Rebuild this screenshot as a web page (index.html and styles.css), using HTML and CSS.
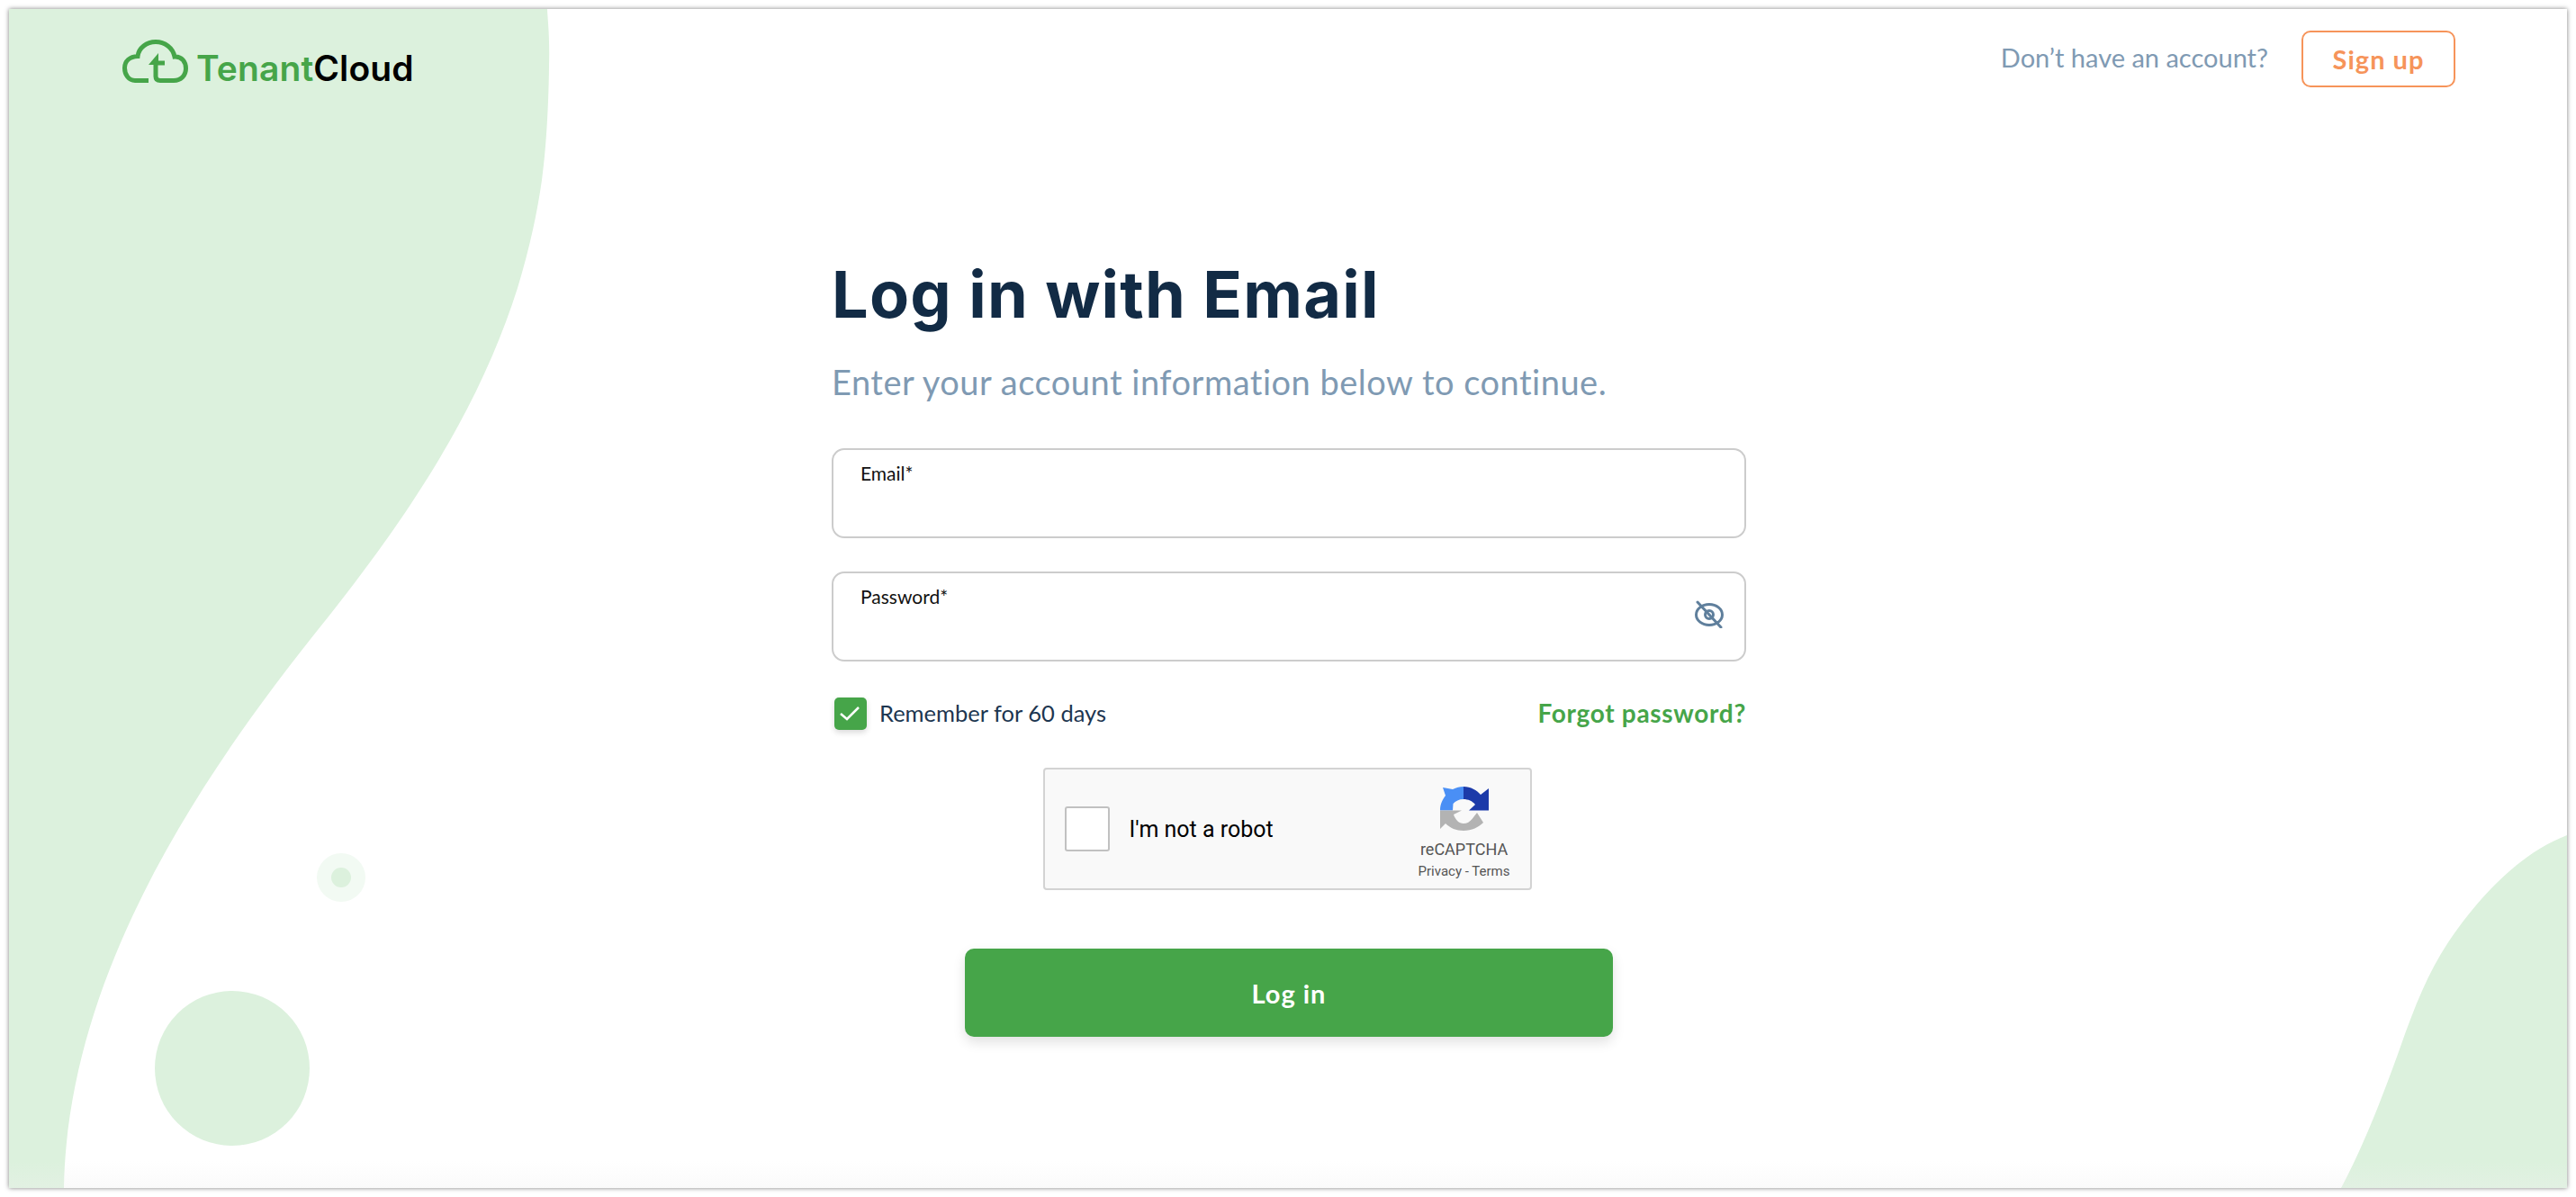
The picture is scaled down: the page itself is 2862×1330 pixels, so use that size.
FILE: index.html
```html
<!DOCTYPE html>
<html lang="en">
<head>
    <meta charset="UTF-8">
    <title>TenantCloud - Log in with Email</title>
    <link rel="stylesheet" href="styles.css">
</head>
<body>
    <div class="frame">
        <svg class="backdrop" viewBox="0 0 2842 1310" aria-hidden="true">
            <path class="blob" d="M0 0H598C598.300 10 601 31 600 63C599.700 94.700 597.800 148.800 592 190C586.200 231.200 577 270.300 565 310C530 420 470 530 355 675C230 830 65 1060 61 1310H0Z" />
            <path class="blob" d="M2842 918C2790 938 2745 985 2710 1037C2688 1070 2672 1110 2657 1153C2640 1200 2620 1255 2591 1310H2842Z" />
            <circle class="blob" cx="248" cy="1177" r="86" />
            <circle class="halo" cx="369" cy="965" r="27" />
            <circle class="blob" cx="369" cy="965" r="11" />
        </svg>

        <header class="topbar">
            <a class="logo" href="#">
                <svg class="logo-mark" viewBox="0 0 73 48" fill="none" stroke="#46a549" stroke-width="5">
                    <path d="M29 45.500H14C7 45.500 2.500 39 2.500 31.500C2.500 24 8 19 17 18.500C18 9 27 2.500 37 2.500C47 2.500 56 9 58 19C66 18.500 70.500 25 70.500 32C70.500 40 65 45.500 57 45.500H42C38.500 45.500 37 44 37 41V24" />
                    <path d="M36 26H47" />
                    <path d="M40 15L29 28H40Z" fill="#46a549" stroke="none" />
                </svg>
                <span class="logo-name"><span class="logo-green">Tenant</span>Cloud</span>
            </a>
            <div class="signup">
                <span class="signup-text">Don’t have an account?</span>
                <a class="signup-btn" href="#">Sign up</a>
            </div>
        </header>

        <main class="login">
            <h1>Log in with Email</h1>
            <p class="lead">Enter your account information below to continue.</p>

            <div class="field">
                <label>Email*</label>
            </div>
            <div class="field">
                <label>Password*</label>
                <svg class="eye" viewBox="0 0 32 31" fill="none" stroke="#5f7f9c" stroke-width="3">
                    <ellipse cx="16" cy="16" rx="14.500" ry="11.500" />
                    <circle cx="16" cy="16" r="4.500" />
                    <path d="M3 2L29 30" stroke-linecap="round" />
                </svg>
            </div>

            <div class="options">
                <label class="remember">
                    <span class="check">
                        <svg viewBox="0 0 36 36" fill="none" stroke="#fff" stroke-width="2.500">
                            <path d="M7 18L14 24L27 11" />
                        </svg>
                    </span>
                    <span class="remember-text">Remember for 60 days</span>
                </label>
                <a class="forgot" href="#">Forgot password?</a>
            </div>

            <div class="captcha">
                <span class="captcha-box"></span>
                <span class="captcha-text">I'm not a robot</span>
                <div class="captcha-brand">
                    <svg class="captcha-logo" viewBox="0 0 54 49">
                        <path fill="#4a8ff5" d="M0 26.500C0 19 3 14 6 10L3 1L14 3C18 1 22 0 26 0V14C21 14 17 16 14.500 19L14 26.500Z" />
                        <path fill="#1c3aa9" d="M26 0C34 0 41 4 45 9L54 2V26.500H32L39 20C36 16 31 14 26 14Z" />
                        <path fill="#b3b3b3" d="M0 26.500H24L15 31C17 37 21 41 26 41C30 41 33 39 35.500 36L41 29L48 40C43 45 35 49 26 49C18 49 11 46 6 41L0 47Z" />
                    </svg>
                    <span class="captcha-name">reCAPTCHA</span>
                    <span class="captcha-links">Privacy - Terms</span>
                </div>
            </div>

            <button class="submit">Log in</button>
        </main>

        <div class="fade"></div>
    </div>
</body>
</html>
```

FILE: styles.css
```css
* {
    box-sizing: border-box;
}

html, body {
    height: 100%;
}

body {
    margin: 0;
    padding: 10px;
    background-color: white;
    font-family: Lato, 'Open Sans', sans-serif;
    color: #122b45;
}

a {
    text-decoration: none;
}

.frame {
    position: relative;
    height: 1310px;
    overflow: hidden;
    background-color: white;
    box-shadow: 0 0 5px rgba(0, 0, 0, 0.5);
}

.backdrop {
    position: absolute;
    top: 0;
    left: 0;
    width: 100%;
    height: 100%;
}

.blob {
    fill: #dcf1dd;
}

.halo {
    fill: #f2faf3;
}

.fade {
    position: absolute;
    left: 0;
    right: 0;
    bottom: 0;
    height: 30px;
    background: linear-gradient(rgba(240, 240, 240, 0), rgba(240, 240, 240, 0.3));
}

.topbar {
    position: relative;
    display: flex;
    justify-content: space-between;
    align-items: flex-start;
    padding: 24px 124px 0 126px;
}

.logo {
    display: flex;
    align-items: flex-start;
    gap: 10px;
    padding-top: 10px;
    color: black;
}

.logo-mark {
    width: 73px;
    height: 48px;
}

.logo-name {
    font-family: Inter, sans-serif;
    font-size: 39px;
    font-weight: 600;
    line-height: 48px;
    letter-spacing: 0.100px;
    margin-top: 8px;
    margin-left: -1px;
}

.logo-green {
    color: #46a549;
}

.signup {
    display: flex;
    align-items: center;
    gap: 37px;
}

.signup-text {
    font-size: 29px;
    color: #7f9ab3;
    margin-top: -4px;
}

.signup-btn {
    display: flex;
    align-items: center;
    justify-content: center;
    width: 171px;
    height: 63px;
    border: 2px solid #f6945a;
    border-radius: 10px;
    font-size: 29px;
    font-weight: 700;
    letter-spacing: 1px;
    color: #f6945a;
}

.login {
    position: relative;
    width: 1016px;
    margin-left: 914px;
    padding-top: 182px;
    display: flex;
    flex-direction: column;
}

h1 {
    margin: 0;
    font-family: Inter, sans-serif;
    font-size: 72px;
    line-height: 90px;
    font-weight: 700;
    letter-spacing: 1.200px;
}

.lead {
    margin: 28px 0 0;
    font-size: 38px;
    line-height: 48px;
    letter-spacing: 0.500px;
    color: #7f9ab3;
}

.field {
    position: relative;
    height: 100px;
    margin-top: 37px;
    padding: 14px 30px;
    background-color: white;
    border: 2px solid #cccccc;
    border-radius: 14px;
}

.lead + .field {
    margin-top: 50px;
}

.field label {
    display: block;
    font-size: 21px;
    line-height: 24px;
    color: #111111;
}

.eye {
    position: absolute;
    top: 30px;
    right: 23px;
    width: 32px;
    height: 31px;
}

.options {
    display: flex;
    justify-content: space-between;
    align-items: center;
    height: 36px;
    margin-top: 40px;
    padding-left: 3px;
}

.remember {
    display: flex;
    align-items: center;
    gap: 14px;
    font-size: 25.500px;
    color: #1d3650;
}

.remember-text {
    margin-top: -2px;
}

.check {
    width: 36px;
    height: 36px;
    background-color: #46a549;
    border-radius: 5px;
    box-shadow: 0 3px 6px rgba(0, 0, 0, 0.15);
}

.check svg {
    display: block;
}

.forgot {
    margin-top: -2px;
    font-size: 28px;
    font-weight: 700;
    letter-spacing: 0.700px;
    color: #46a549;
}

.captcha {
    display: flex;
    align-items: center;
    align-self: center;
    width: 543px;
    height: 136px;
    margin-top: 42px;
    margin-right: 4px;
    padding: 0 22px;
    background-color: #f9f9f9;
    border: 2px solid #d3d3d3;
    border-radius: 4px;
    font-family: Roboto, sans-serif;
}

.captcha-box {
    width: 50px;
    height: 50px;
    background-color: white;
    border: 2px solid #c1c1c1;
    border-radius: 3px;
}

.captcha-text {
    margin-left: 22px;
    font-size: 25px;
    color: black;
}

.captcha-brand {
    display: flex;
    flex-direction: column;
    align-items: center;
    margin-left: auto;
    padding-top: 10px;
    color: #555555;
}

.captcha-logo {
    width: 54px;
    height: 49px;
}

.captcha-name {
    font-size: 18px;
    line-height: 24px;
    margin-top: 9px;
}

.captcha-links {
    font-size: 15px;
    line-height: 22px;
    margin-top: 1px;
}

.submit {
    align-self: center;
    width: 720px;
    height: 98px;
    margin-top: 65px;
    background-color: #46a549;
    color: white;
    border: none;
    border-radius: 10px;
    font-family: Lato, sans-serif;
    font-size: 29px;
    font-weight: 700;
    letter-spacing: 1px;
    box-shadow: 0 6px 14px rgba(0, 0, 0, 0.12);
}
```
